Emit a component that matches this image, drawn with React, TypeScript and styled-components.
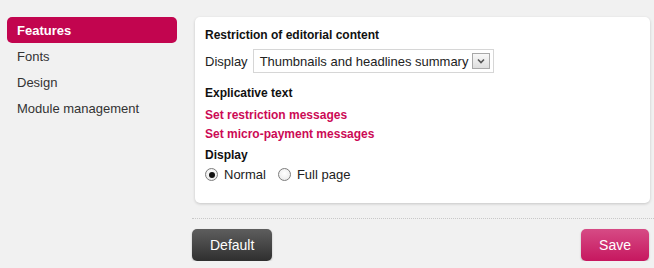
import React, { useState } from "react";
import styled, { createGlobalStyle } from "styled-components";

const GlobalStyle = createGlobalStyle`
  html, body {
    margin: 0;
    padding: 0;
    background: #f1f1f1;
    font-family: "Liberation Sans", Arial, sans-serif;
    color: #222;
  }
`;

const accent = "#c2054f";

const Page = styled.div`
  display: flex;
  align-items: flex-start;
  padding-top: 17px;
  width: 654px;
  box-sizing: border-box;
`;

const Sidebar = styled.nav`
  width: 170px;
  margin-left: 7px;
  display: flex;
  flex-direction: column;
`;

const NavItem = styled.div<{ $active?: boolean }>`
  height: 26px;
  line-height: 27px;
  padding-left: 10px;
  font-size: 13px;
  border-radius: 5px;
  color: ${(p) => (p.$active ? "#fff" : "#333")};
  background: ${(p) => (p.$active ? accent : "transparent")};
  font-weight: ${(p) => (p.$active ? "bold" : "normal")};
  cursor: pointer;
`;

const Main = styled.main`
  flex: 1;
  margin-left: 17px;
  display: flex;
  flex-direction: column;
`;

const Panel = styled.section`
  margin-left: 1px;
  margin-right: 4px;
  background: #fff;
  border-radius: 5px;
  box-shadow: 0 1px 3px rgba(0, 0, 0, 0.18);
  padding: 11px 10px 19px 10px;
`;

const Heading = styled.h3<{ $gap?: number }>`
  margin: ${(p) => p.$gap ?? 0}px 0 0 0;
  font-size: 12px;
  line-height: 15px;
  font-weight: bold;
  color: #111;
`;

const FieldRow = styled.div`
  margin-top: 6px;
  display: flex;
  align-items: center;
  gap: 5px;
  height: 24px;
`;

const Label = styled.span`
  font-size: 13px;
  color: #222;
`;

const SelectBox = styled.div`
  width: 241px;
  height: 24px;
  box-sizing: border-box;
  border: 1px solid #d6d6d6;
  background: #fff;
  display: flex;
  align-items: center;
  justify-content: space-between;
  padding: 0 3px 0 6px;
  font-size: 13px;
  color: #222;
`;

const SelectArrow = styled.span`
  width: 18px;
  height: 16px;
  box-sizing: border-box;
  border: 1px solid #a8a8a8;
  background: linear-gradient(#f8f8f8, #dedede);
  display: flex;
  align-items: center;
  justify-content: center;
`;

const Link = styled.a<{ $gap: number }>`
  display: block;
  margin-top: ${(p) => p.$gap}px;
  font-size: 12px;
  line-height: 19px;
  font-weight: bold;
  color: #cc0a55;
  text-decoration: none;
  cursor: pointer;
`;

const RadioRow = styled.div`
  margin-top: 2px;
  height: 19px;
  display: flex;
  align-items: center;
  gap: 12px;
`;

const RadioOption = styled.label`
  display: flex;
  align-items: center;
  gap: 6px;
  font-size: 13px;
  color: #222;
  cursor: pointer;
`;

const RadioDot = styled.span<{ $checked: boolean }>`
  width: 13px;
  height: 13px;
  box-sizing: border-box;
  border-radius: 50%;
  border: 1px solid #7d7d7d;
  background: radial-gradient(circle at 50% 40%, #fff, #e6e6e6);
  display: flex;
  align-items: center;
  justify-content: center;

  &::after {
    content: "";
    width: 6px;
    height: 6px;
    border-radius: 50%;
    background: #111;
    display: ${(p) => (p.$checked ? "block" : "none")};
  }
`;

const Footer = styled.div`
  margin: 15px 0 0 -2px;
  border-top: 1px dotted #c8c8c8;
  padding: 10px 5px 0 0;
  display: flex;
  justify-content: space-between;
`;

const Button = styled.button<{ $primary?: boolean }>`
  height: 32px;
  padding: 0 18px;
  border: none;
  border-radius: 5px;
  font-family: "Liberation Sans", Arial, sans-serif;
  font-size: 14px;
  color: #fff;
  cursor: pointer;
  background: ${(p) =>
    p.$primary
      ? "linear-gradient(#d64b85, #c6175f)"
      : "linear-gradient(#5e5e5e, #2f2f2f)"};
  box-shadow: 0 1px 2px rgba(0, 0, 0, 0.25);
`;

const navItems = ["Features", "Fonts", "Design", "Module management"];

export default function App() {
  const [mode, setMode] = useState("normal");

  return (
    <>
      <GlobalStyle />
      <Page>
        <Sidebar>
          {navItems.map((item, i) => (
            <NavItem key={item} $active={i === 0}>
              {item}
            </NavItem>
          ))}
        </Sidebar>
        <Main>
          <Panel>
            <Heading>Restriction of editorial content</Heading>
            <FieldRow>
              <Label>Display</Label>
              <SelectBox>
                <span>Thumbnails and headlines summary</span>
                <SelectArrow>
                  <svg width="8" height="6" viewBox="0 0 8 6">
                    <path d="M1 1.5 L4 4.5 L7 1.5" fill="none" stroke="#555" strokeWidth="1.6" />
                  </svg>
                </SelectArrow>
              </SelectBox>
            </FieldRow>
            <Heading $gap={13}>Explicative text</Heading>
            <Link $gap={5}>Set restriction messages</Link>
            <Link $gap={0}>Set micro-payment messages</Link>
            <Heading $gap={4}>Display</Heading>
            <RadioRow>
              <RadioOption onClick={() => setMode("normal")}>
                <RadioDot $checked={mode === "normal"} />
                Normal
              </RadioOption>
              <RadioOption onClick={() => setMode("full")}>
                <RadioDot $checked={mode === "full"} />
                Full page
              </RadioOption>
            </RadioRow>
          </Panel>
          <Footer>
            <Button>Default</Button>
            <Button $primary>Save</Button>
          </Footer>
        </Main>
      </Page>
    </>
  );
}
